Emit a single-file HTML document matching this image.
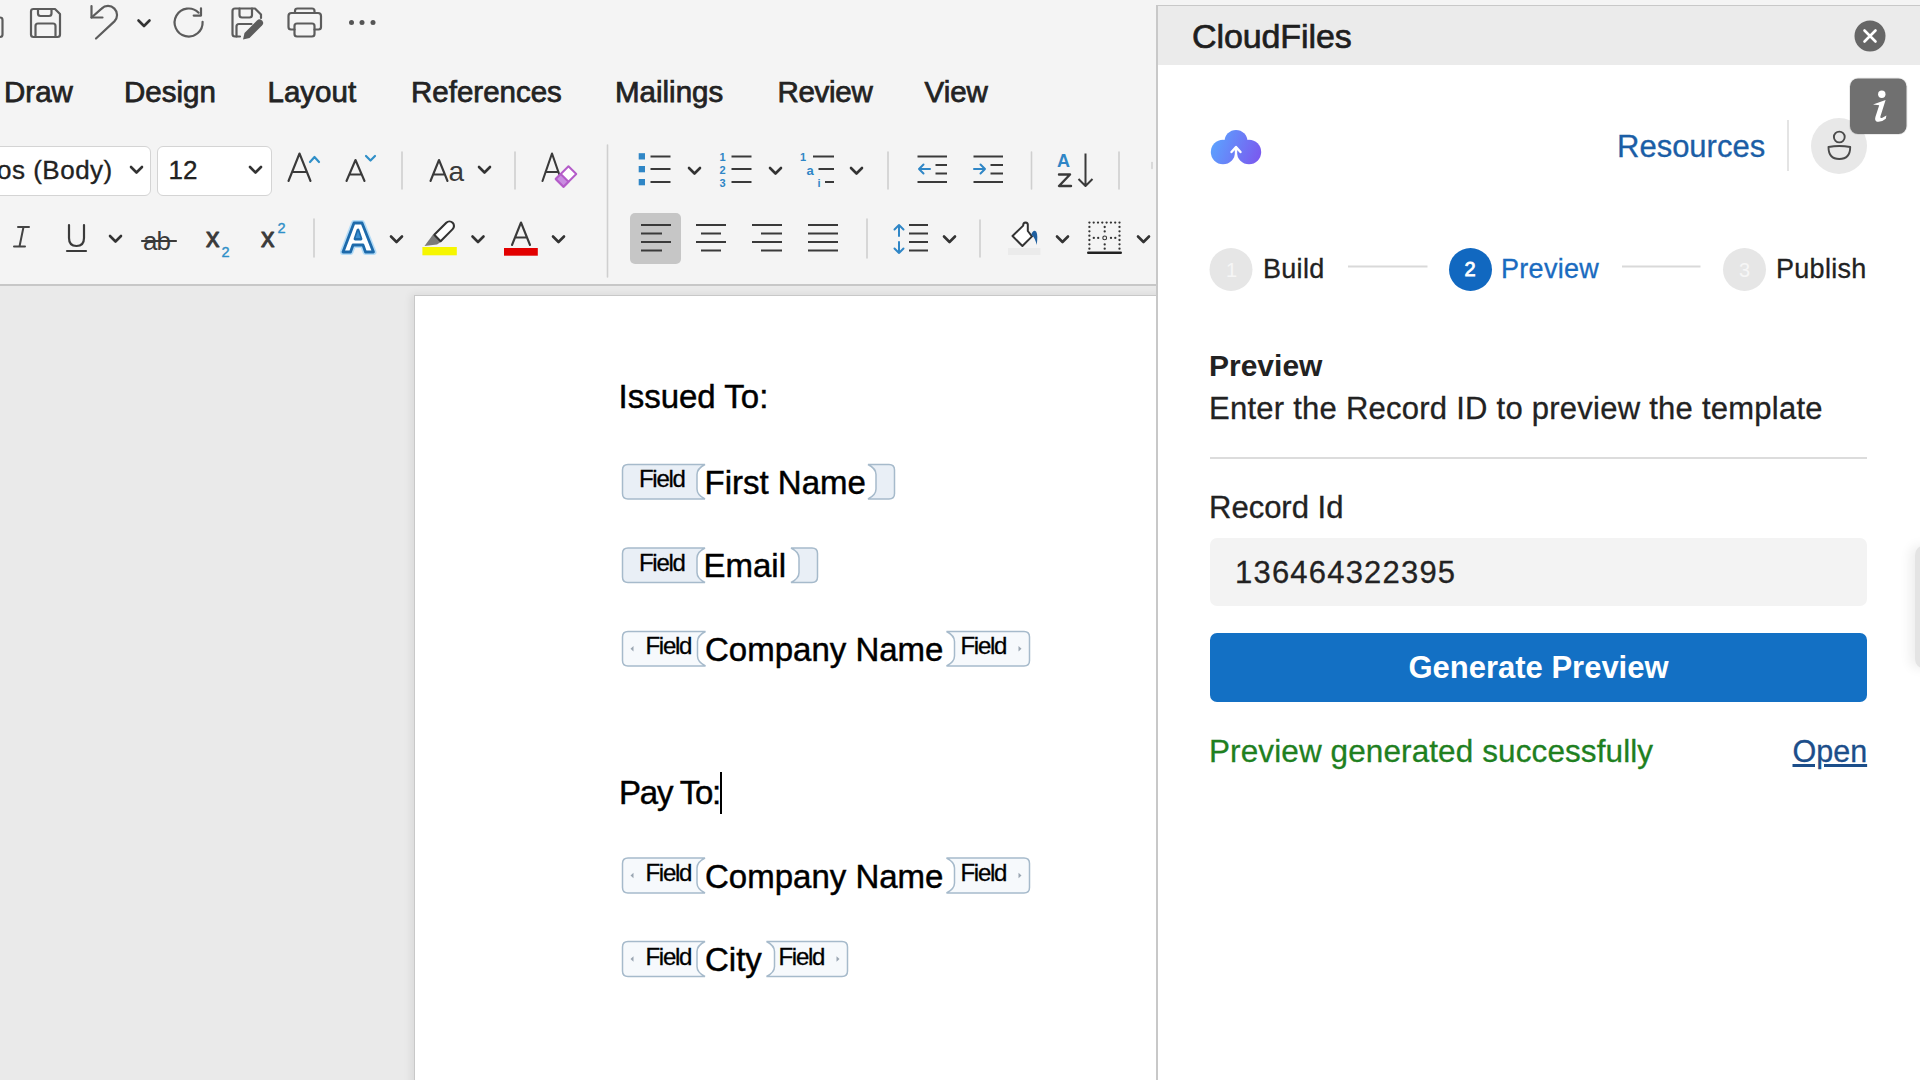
<!DOCTYPE html>
<html><head><meta charset="utf-8">
<style>
*{margin:0;padding:0;box-sizing:border-box}
html,body{width:1920px;height:1080px;overflow:hidden;background:#f4f4f4;font-family:"Liberation Sans",sans-serif;color:#222}
.a{position:absolute;white-space:nowrap}
#ribbon{position:absolute;left:0;top:0;width:1156px;height:285px;background:#f4f4f4}
#ribline{position:absolute;left:0;top:284px;width:1156px;height:2px;background:#c7c7c7}
#docbg{position:absolute;left:0;top:286px;width:1156px;height:794px;background:#eaeaea}
#page{position:absolute;left:414px;top:295px;width:760px;height:800px;background:#fff;border-left:1px solid #c8c8c8;border-top:1px solid #c8c8c8;box-shadow:-3px -1px 8px rgba(0,0,0,0.07)}
.tab{font-size:29.5px;color:#232323;top:75.3px;-webkit-text-stroke:0.75px #232323}
.doc{font-size:33px;color:#000;-webkit-text-stroke:0.45px #000}
.stp{font-size:27px;letter-spacing:0.3px;-webkit-text-stroke:0.45px currentColor}
.fld{font-size:24px;color:#000;letter-spacing:-1.3px;-webkit-text-stroke:0.3px #000}
#pane{position:absolute;left:1156px;top:5px;width:764px;height:1075px;background:#fff;border-left:2px solid #c8c8c8;border-top:1px solid #c8c8c8}
.sw{-webkit-text-stroke:0.3px currentColor}
#phead{position:absolute;left:1158px;top:6px;width:762px;height:59px;background:#ebebeb}
</style></head><body>
<div id="ribbon"></div>
<div id="ribline"></div>
<div id="docbg"></div>
<div id="page"></div>

<!-- tabs -->
<div class="a tab" style="left:4px">Draw</div>
<div class="a tab" style="left:124px">Design</div>
<div class="a tab" style="left:267.5px">Layout</div>
<div class="a tab" style="left:411px">References</div>
<div class="a tab" style="left:615px">Mailings</div>
<div class="a tab" style="left:777.5px;letter-spacing:-0.3px">Review</div>
<div class="a tab" style="left:924.5px">View</div>

<!-- font boxes -->
<div class="a" style="left:-10px;top:145.5px;width:161px;height:50px;background:#fff;border:1px solid #d4d4d4;border-radius:6px"></div>
<div class="a" style="left:157px;top:145.5px;width:115px;height:50px;background:#fff;border:1px solid #d4d4d4;border-radius:6px"></div>
<div class="a" style="left:-3px;top:154.5px;font-size:26px;color:#222;letter-spacing:0.5px;-webkit-text-stroke:0.35px #222">os (Body)</div>
<div class="a" style="left:168.5px;top:154.5px;font-size:26px;color:#222;-webkit-text-stroke:0.35px #222">12</div>

<!-- align-left selected bg -->
<div class="a" style="left:630px;top:213px;width:51px;height:51px;background:#c6c6c6;border-radius:5px"></div>

<svg class="a" style="left:0;top:0" width="1156" height="285" viewBox="0 0 1156 285" fill="none" stroke-linecap="round" stroke-linejoin="round">
<g stroke="#5c5c5c" stroke-width="2.2">
<path d="M-6 17.5 H0 Q2.5 17.5 2.5 20 V34.5 Q2.5 37 0 37 H-6"/>
<path d="M33.5 9 H55 L60 14 V34.5 Q60 37 57.5 37 H33.5 Q31 37 31 34.5 V11.5 Q31 9 33.5 9 Z"/>
<path d="M38 9 V13.5 Q38 16 40.5 16 H49 Q51.5 16 51.5 13.5 V9"/>
<path d="M35.5 37 V26 Q35.5 23.5 38 23.5 H53 Q55.5 23.5 55.5 26 V37"/>
<path d="M91.5 6 V17.5 H102.5"/>
<path d="M91.5 17.5 L101.6 8.6 A9 9 0 0 1 114.4 21.4 L96 38.5"/>
<path d="M202.6 21.8 A14 14 0 1 1 198.6 12.7"/>
<path d="M201 8.3 V15.6 H193.7"/>
<path d="M261 18 V14.5 L255 8.5 H235 Q232.5 8.5 232.5 11 V34 Q232.5 36.5 235 36.5 H240"/>
<path d="M239.5 8.5 V15 Q239.5 17.5 242 17.5 H249.5 Q252 17.5 252 15 V8.5"/>
<path d="M236.5 36.5 V26.5 Q236.5 24 239 24 H251.5"/>
<path d="M295 13 V11 Q295 8.5 297.5 8.5 H312 Q314.5 8.5 314.5 11 V13"/>
<path d="M294.5 29.5 H291 Q288.5 29.5 288.5 27 V16 Q288.5 13 291.5 13 H318 Q321 13 321 16 V27 Q321 29.5 318.5 29.5 H314.5"/>
<rect x="294.5" y="23.5" width="20" height="13" rx="2.5"/>
</g>
<path d="M243 39.5 L244.5 33 L257 20.5 Q259.5 18 262 20.5 Q264.5 23 262 25.5 L249.5 38 Z" fill="#5c5c5c"/>
<g fill="#555"><circle cx="351.5" cy="22.5" r="2.5"/><circle cx="362" cy="22.5" r="2.5"/><circle cx="373" cy="22.5" r="2.5"/></g>

<!-- chevrons -->
<g stroke="#333" stroke-width="2.6">
<path d="M138.5 20.5 L144 26 L149.5 20.5"/>
<path d="M131 167 L136.5 172.5 L142 167"/>
<path d="M250 167 L255.5 172.5 L261 167"/>
<path d="M479 167 L484.5 172.5 L490 167"/>
<path d="M110 236 L115.5 241.5 L121 236"/>
<path d="M391 236.5 L396.5 242 L402 236.5"/>
<path d="M472.5 236.5 L478 242 L483.5 236.5"/>
<path d="M553 236.5 L558.5 242 L564 236.5"/>
<path d="M689 168 L694.5 173.5 L700 168"/>
<path d="M770 168 L775.5 173.5 L781 168"/>
<path d="M851 168 L856.5 173.5 L862 168"/>
<path d="M944 236.5 L949.5 242 L955 236.5"/>
<path d="M1057 236.5 L1062.5 242 L1068 236.5"/>
<path d="M1138 236.5 L1143.5 242 L1149 236.5"/>
</g>

<!-- separators -->
<g stroke="#cfcfcf" stroke-width="1.6">
<path d="M402 152 V189"/><path d="M515 152 V189"/><path d="M314 219 V257"/>
<path d="M607.5 145 V277"/><path d="M888 152 V189"/><path d="M1031.5 152 V189"/><path d="M1119 152 V189"/>
<path d="M867 219 V258"/><path d="M980 220 V257"/>
</g>

<!-- font row 1 glyphs -->
<g stroke="#3a3a3a" stroke-width="2.1">
<path d="M288.5 181 L299.5 153.5 L310.5 181 M292 172 H307"/>
<path d="M346.5 181 L355.5 160 L364.5 181 M349.3 174.5 H361.7"/>
<path d="M430.5 181 L439 160 L447.5 181 M433.2 174.5 H444.8"/>
<path d="M542.5 181 L552 153.5 L561.5 181 M545.5 172 H558.5"/>
</g>
<text x="448.5" y="181" font-family="Liberation Sans" font-size="28" fill="#3a3a3a">a</text>
<g stroke="#2f8fc8" stroke-width="2.2">
<path d="M310 162 L314.5 157 L319 162"/>
<path d="M366 156 L370.5 160.5 L375 156"/>
</g>
<g transform="translate(566 176.5) rotate(-45)">
<rect x="-9" y="-5.5" width="18" height="11" fill="#fff" stroke="#b45cc9" stroke-width="2"/>
<rect x="-9" y="-5.5" width="7" height="11" fill="#c98de0" stroke="#b45cc9" stroke-width="2"/>
</g>

<!-- font row 2 -->
<g stroke="#444" stroke-width="2">
<path d="M18 227 H29 M14 246.5 H25 M23.5 227 L19.5 246.5"/>
</g>
<g stroke="#3a3a3a" stroke-width="2.2">
<path d="M69 225 V238 Q69 246 76.5 246 Q84 246 84 238 V225"/>
<path d="M67 251 H86"/>
<path d="M142 241 H176"/>
</g>
<text x="143" y="250" font-family="Liberation Sans" font-size="26" fill="#3a3a3a" letter-spacing="-1">ab</text>
<text x="206" y="247" font-family="Liberation Sans" font-size="27" fill="#3a3a3a" stroke="#3a3a3a" stroke-width="0.9">x</text>
<text x="221.5" y="256.5" font-family="Liberation Sans" font-size="14.5" fill="#2f8fc8" stroke="#2f8fc8" stroke-width="0.4">2</text>
<text x="261" y="247" font-family="Liberation Sans" font-size="27" fill="#3a3a3a" stroke="#3a3a3a" stroke-width="0.9">x</text>
<text x="277.5" y="232.5" font-family="Liberation Sans" font-size="14.5" fill="#2f8fc8" stroke="#2f8fc8" stroke-width="0.4">2</text>

<!-- text effects A -->
<path d="M343 252 L354 223 H362 L373.5 252 H365.5 L363 245 H353 L350.5 252 Z M355 239 H361 L358 230 Z" fill="#fff" stroke="#b3dbf6" stroke-width="6" stroke-linejoin="round"/>
<path d="M343 252 L354 223 H362 L373.5 252 H365.5 L363 245 H353 L350.5 252 Z M355 239 H361 L358 230 Z" fill="#fff" stroke="#1d6aab" stroke-width="2.8" stroke-linejoin="round"/>
<path d="M355.5 238 H360.5 L358 231 Z" fill="#3d8fd0"/>
<!-- highlighter -->
<path d="M433 234.5 L441.5 241.5 L437 244.5 L424.5 246 Z" fill="#7a7a7a"/>
<g transform="translate(443.8 231.6) rotate(-45)">
<path d="M-9 -4.5 H8 A4.5 4.5 0 0 1 8 4.5 H-9 Z" fill="#fff" stroke="#333" stroke-width="2.1" stroke-linejoin="round"/>
</g>
<rect x="422.4" y="247" width="34.4" height="8.3" fill="#f6f600"/>
<!-- font color -->
<path d="M512 245 L521 222.5 L530 245 M515 237.5 H527" stroke="#3a3a3a" stroke-width="2.1"/>
<rect x="504" y="248" width="33.8" height="7.7" fill="#e20000"/>

<!-- bullets -->
<g fill="#2f86c6">
<rect x="638.7" y="153.2" width="6.3" height="6.3"/><rect x="638.7" y="166" width="6.3" height="6.3"/><rect x="638.7" y="179" width="6.3" height="6.3"/>
</g>
<g stroke="#3a3a3a" stroke-width="2" stroke-linecap="butt">
<path d="M650.5 156.5 H670.5 M650.5 169 H670.5 M650.5 182 H670.5"/>
<path d="M731.5 156.5 H751.5 M731.5 169 H751.5 M731.5 182 H751.5"/>
<path d="M813 156.5 H834 M818.5 169 H834 M825 182 H834"/>
<path d="M917.5 156.5 H947 M935.5 165 H947 M935.5 173.5 H947 M917.5 182 H947"/>
<path d="M973.5 156.5 H1003 M990.5 165 H1003 M990.5 173.5 H1003 M973.5 182 H1003"/>
<path d="M1085.5 153.5 V186 M1078.5 179 L1085.5 186 L1092.5 179"/>
</g>
<g font-family="Liberation Sans" font-weight="bold" fill="#2f86c6" font-size="11">
<text x="719.5" y="161">1</text><text x="719.5" y="173.5">2</text><text x="719.5" y="186.5">3</text>
<text x="800" y="161">1</text><text x="806.5" y="174.5" font-size="13">a</text><text x="817.5" y="187">i</text>
</g>
<g stroke="#2f86c6" stroke-width="2">
<path d="M930 169 H919 M923.5 164.5 L919 169 L923.5 173.5"/>
<path d="M974 169 H985 M980.5 164.5 L985 169 L980.5 173.5"/>
<path d="M899 225 V236 M894.5 229.5 L899 225 L903.5 229.5 M899 242 V253 M894.5 248.5 L899 253 L903.5 248.5"/>
</g>
<text x="1057" y="167" font-family="Liberation Sans" font-weight="bold" font-size="18" fill="#2f86c6">A</text>
<path d="M1059 174.5 H1070 L1059 186 H1071" stroke="#3a3a3a" stroke-width="2.4"/>

<!-- alignment -->
<g stroke="#3a3a3a" stroke-width="2.2" stroke-linecap="butt">
<path d="M641 225 H671 M641 233.5 H662 M641 242 H671 M641 250.5 H662"/>
<path d="M696 225 H726 M701 233.5 H721 M696 242 H726 M701 250.5 H721"/>
<path d="M752 225 H782 M761 233.5 H782 M752 242 H782 M761 250.5 H782"/>
<path d="M808 225 H838 M808 233.5 H838 M808 242 H838 M808 250.5 H838"/>
<path d="M909 225 H928 M909 233.5 H928 M909 242 H928 M909 250.5 H928"/>
</g>
<!-- shading -->
<rect x="1008" y="248" width="32.5" height="7" fill="#ebebeb"/>
<path d="M1012.5 236 L1023.2 225.6 Q1023 222.6 1025.6 222.4 Q1028 222.6 1027.8 225 V231 L1032 236.4 L1022.4 246 Z" fill="#fff" stroke="#333" stroke-width="2" stroke-linejoin="round"/>
<path d="M1031.3 234.5 Q1033.5 228.8 1036.3 231.8 Q1038.2 235.5 1036.6 245 Q1035.6 238.5 1031.3 234.5 Z" fill="#1f5f9f"/>
<!-- borders -->
<g fill="#333"><circle cx="1089.4" cy="222.6" r="1.15"/><circle cx="1093.7" cy="222.6" r="1.15"/><circle cx="1098.0" cy="222.6" r="1.15"/><circle cx="1102.3" cy="222.6" r="1.15"/><circle cx="1106.6" cy="222.6" r="1.15"/><circle cx="1110.9" cy="222.6" r="1.15"/><circle cx="1115.2" cy="222.6" r="1.15"/><circle cx="1119.5" cy="222.6" r="1.15"/><circle cx="1089.4" cy="226.9" r="1.15"/><circle cx="1119.5" cy="226.9" r="1.15"/><circle cx="1089.4" cy="231.3" r="1.15"/><circle cx="1119.5" cy="231.3" r="1.15"/><circle cx="1089.4" cy="235.7" r="1.15"/><circle cx="1119.5" cy="235.7" r="1.15"/><circle cx="1089.4" cy="240.0" r="1.15"/><circle cx="1119.5" cy="240.0" r="1.15"/><circle cx="1089.4" cy="244.3" r="1.15"/><circle cx="1119.5" cy="244.3" r="1.15"/><circle cx="1089.4" cy="248.7" r="1.15"/><circle cx="1119.5" cy="248.7" r="1.15"/><circle cx="1104.7" cy="227.0" r="1.15"/><circle cx="1104.7" cy="231.4" r="1.15"/><circle cx="1104.7" cy="244.4" r="1.15"/><circle cx="1104.7" cy="248.7" r="1.15"/><circle cx="1093.8" cy="237.9" r="1.15"/><circle cx="1098.2" cy="237.9" r="1.15"/><circle cx="1111.0" cy="237.9" r="1.15"/><circle cx="1115.3" cy="237.9" r="1.15"/></g>
<circle cx="1104.7" cy="237.9" r="1.9" fill="none" stroke="#333" stroke-width="1.1"/>
<path d="M1088.2 252.7 H1120.8" stroke="#222" stroke-width="2.4" stroke-linecap="round"/>
<path d="M1152 162.5 V168.5" stroke="#d0d0d0" stroke-width="1.5"/>
</svg>

<!-- document -->
<svg class="a" style="left:0;top:0" width="1156" height="1080" viewBox="0 0 1156 1080" fill="none">
<path d="M628.0 464.5 H705 C701 466.5 697 469.5 697 474.5 V489 C697 494 701 497 705 499 H628.0 Q622.5 499 622.5 493.5 V470.0 Q622.5 464.5 628.0 464.5 Z" fill="#e9eff6" stroke="#a6bacb" stroke-width="1.5"/>
<path d="M868 464.5 H889.0 Q894.5 464.5 894.5 470.0 V493.5 Q894.5 499 889.0 499 H868 C872 497 876 494 876 489 V474.5 C876 469.5 872 466.5 868 464.5 Z" fill="#e9eff6" stroke="#a6bacb" stroke-width="1.5"/>
<path d="M628.0 548 H705 C701 550 697 553 697 558 V572.5 C697 577.5 701 580.5 705 582.5 H628.0 Q622.5 582.5 622.5 577.0 V553.5 Q622.5 548 628.0 548 Z" fill="#e9eff6" stroke="#a6bacb" stroke-width="1.5"/>
<path d="M791 548 H812.0 Q817.5 548 817.5 553.5 V577.0 Q817.5 582.5 812.0 582.5 H791 C795 580.5 799 577.5 799 572.5 V558 C799 553 795 550 791 548 Z" fill="#e9eff6" stroke="#a6bacb" stroke-width="1.5"/>
<path d="M628.0 631.5 H705.5 C701.5 633.5 697.5 636.5 697.5 641.5 V656 C697.5 661 701.5 664 705.5 666 H628.0 Q622.5 666 622.5 660.5 V637.0 Q622.5 631.5 628.0 631.5 Z" fill="#f6f9fc" stroke="#a6bacb" stroke-width="1.5"/><path d="M633.5 645.95 L630.5 648.75 L633.5 651.55 Z" fill="#9aa6b2"/>
<path d="M946.5 631.5 H1024.0 Q1029.5 631.5 1029.5 637.0 V660.5 Q1029.5 666 1024.0 666 H946.5 C950.5 664 954.5 661 954.5 656 V641.5 C954.5 636.5 950.5 633.5 946.5 631.5 Z" fill="#f6f9fc" stroke="#a6bacb" stroke-width="1.5"/><path d="M1018.5 645.95 L1021.5 648.75 L1018.5 651.55 Z" fill="#9aa6b2"/>
<path d="M628.0 858 H705 C701 860 697 863 697 868 V883 C697 888 701 891 705 893 H628.0 Q622.5 893 622.5 887.5 V863.5 Q622.5 858 628.0 858 Z" fill="#f6f9fc" stroke="#a6bacb" stroke-width="1.5"/><path d="M633.5 872.7 L630.5 875.5 L633.5 878.3 Z" fill="#9aa6b2"/>
<path d="M946.5 858 H1024.0 Q1029.5 858 1029.5 863.5 V887.5 Q1029.5 893 1024.0 893 H946.5 C950.5 891 954.5 888 954.5 883 V868 C954.5 863 950.5 860 946.5 858 Z" fill="#f6f9fc" stroke="#a6bacb" stroke-width="1.5"/><path d="M1018.5 872.7 L1021.5 875.5 L1018.5 878.3 Z" fill="#9aa6b2"/>
<path d="M628.0 941.5 H705 C701 943.5 697 946.5 697 951.5 V966.5 C697 971.5 701 974.5 705 976.5 H628.0 Q622.5 976.5 622.5 971.0 V947.0 Q622.5 941.5 628.0 941.5 Z" fill="#f6f9fc" stroke="#a6bacb" stroke-width="1.5"/><path d="M633.5 956.2 L630.5 959.0 L633.5 961.8 Z" fill="#9aa6b2"/>
<path d="M766.5 941.5 H842.0 Q847.5 941.5 847.5 947.0 V971.0 Q847.5 976.5 842.0 976.5 H766.5 C770.5 974.5 774.5 971.5 774.5 966.5 V951.5 C774.5 946.5 770.5 943.5 766.5 941.5 Z" fill="#f6f9fc" stroke="#a6bacb" stroke-width="1.5"/><path d="M836.5 956.2 L839.5 959.0 L836.5 961.8 Z" fill="#9aa6b2"/>
</svg>
<div class="a doc" style="left:618.5px;top:377.8px">Issued To:</div>
<div class="a doc" style="left:704.5px;top:463.8px">First Name</div>
<div class="a doc" style="left:703.5px;top:547.3px">Email</div>
<div class="a doc" style="left:705px;top:630.8px">Company Name</div>
<div class="a doc" style="left:619px;top:773.8px;letter-spacing:-1.2px">Pay To:</div>
<div class="a" style="left:720px;top:772px;width:2px;height:42px;background:#000"></div>
<div class="a doc" style="left:705px;top:857.6px">Company Name</div>
<div class="a doc" style="left:705px;top:941.1px">City</div>
<div class="a fld" style="left:639px;top:465.3px">Field</div>
<div class="a fld" style="left:639px;top:548.8px">Field</div>
<div class="a fld" style="left:645.5px;top:632.4px">Field</div>
<div class="a fld" style="left:960.5px;top:632.4px">Field</div>
<div class="a fld" style="left:645.5px;top:859.1px">Field</div>
<div class="a fld" style="left:960.5px;top:859.1px">Field</div>
<div class="a fld" style="left:645.5px;top:942.6px">Field</div>
<div class="a fld" style="left:778.5px;top:942.6px">Field</div>

<!-- pane -->
<div id="pane"></div>
<div id="phead"></div>
<div class="a" style="left:1192px;top:17px;font-size:34px;color:#1e1e1e;-webkit-text-stroke:0.7px #1e1e1e;letter-spacing:-0.1px">CloudFiles</div>
<svg class="a" style="left:1156px;top:0" width="764" height="320" viewBox="1156 0 764 320">
<circle cx="1870" cy="36" r="15.5" fill="#666"/>
<path d="M1864.5 30.5 L1875.5 41.5 M1875.5 30.5 L1864.5 41.5" stroke="#fff" stroke-width="2.6" stroke-linecap="round"/>
<defs><linearGradient id="cg" gradientUnits="userSpaceOnUse" x1="1211" y1="140" x2="1261" y2="160"><stop offset="0" stop-color="#5ba4ff"/><stop offset="1" stop-color="#7b57ee"/></linearGradient></defs>
<g fill="url(#cg)">
<circle cx="1223" cy="152" r="12.2"/><circle cx="1236" cy="141.5" r="11.5"/><circle cx="1249" cy="152" r="12.2"/>
<rect x="1226" y="141" width="20" height="13"/>
</g>
<path d="M1236 161 V147.5 M1231.5 152 L1236 147 L1240.5 152" stroke="#fff" stroke-width="2.4" fill="none" stroke-linecap="round" stroke-linejoin="round"/>
<path d="M1788 120 V171" stroke="#dedede" stroke-width="1.6"/>
<circle cx="1839" cy="146" r="28" fill="#e8e8e8"/>
<circle cx="1839.3" cy="137" r="5.4" fill="none" stroke="#4a4a4a" stroke-width="1.9"/>
<path d="M1828.5 147 Q1839.3 145 1850.2 147 Q1850.2 159 1839.3 159 Q1828.5 159 1828.5 147 Z" fill="none" stroke="#4a4a4a" stroke-width="1.9" stroke-linejoin="round"/>
<rect x="1849" y="77.5" width="58.5" height="57.5" rx="9" fill="#000" opacity="0.08"/><rect x="1850" y="78.5" width="56.5" height="55.5" rx="8" fill="#707070"/>
<circle cx="1881.8" cy="94.2" r="3.7" fill="#fff"/>
<path d="M1873 104.5 L1885.6 100 L1880.4 116.5 Q1879.9 118.8 1882.4 117.8 L1886.4 115.5 L1885.8 118.7 Q1881.4 122.5 1876.9 121.7 Q1874.4 120.8 1875.4 117.1 L1879.2 105.3 Z" fill="#fff"/>
<circle cx="1231" cy="269.5" r="21.5" fill="#e6e6e6"/>
<text x="1231.5" y="276.5" text-anchor="middle" font-family="Liberation Sans" font-size="20" fill="#f6f6f6">1</text>
<circle cx="1470.5" cy="269.5" r="21.5" fill="#1168c0"/>
<text x="1470" y="276.3" text-anchor="middle" font-family="Liberation Sans" font-size="20" fill="#fff" stroke="#fff" stroke-width="0.8">2</text>
<circle cx="1744.5" cy="269.5" r="21.5" fill="#e6e6e6"/>
<text x="1744.5" y="276.5" text-anchor="middle" font-family="Liberation Sans" font-size="20" fill="#f6f6f6">3</text>
<path d="M1348 266.5 H1427.5 M1622 266.5 H1700.5" stroke="#d9d9d9" stroke-width="2.2"/>
</svg>
<div class="a sw" style="left:1617px;top:129px;font-size:31px;color:#1b5ea6">Resources</div>
<div class="a sw stp" style="left:1263px;top:254px;color:#222">Build</div>
<div class="a sw stp" style="left:1501px;top:254px;color:#1a6bc0">Preview</div>
<div class="a sw stp" style="left:1776px;top:254px;color:#222">Publish</div>
<div class="a" style="left:1209px;top:349px;font-size:30px;font-weight:bold;color:#222">Preview</div>
<div class="a sw" style="left:1209px;top:391px;font-size:31px;color:#222;letter-spacing:0.25px">Enter the Record ID to preview the template</div>
<div class="a" style="left:1210px;top:457px;width:657px;height:2px;background:#dcdcdc"></div>
<div class="a sw" style="left:1209px;top:490px;font-size:31px;color:#222">Record Id</div>
<div class="a" style="left:1210px;top:538px;width:657px;height:68px;background:#f3f3f3;border-radius:7px"></div>
<div class="a sw" style="left:1235px;top:555px;font-size:31px;color:#222;letter-spacing:1.2px">136464322395</div>
<div class="a" style="left:1210px;top:633px;width:657px;height:69px;background:#1370c4;border-radius:7px"></div>
<div class="a" style="left:1210px;top:650px;width:657px;text-align:center;font-size:31px;font-weight:bold;color:#fff">Generate Preview</div>
<div class="a sw" style="left:1209px;top:733px;font-size:31.5px;color:#1f801f;letter-spacing:0.1px">Preview generated successfully</div>
<div class="a sw" style="left:1792.5px;top:734px;font-size:30.5px;color:#1c4e8a;text-decoration:underline">Open</div>
<div class="a" style="left:1915px;top:545px;width:20px;height:124px;border-radius:10px;background:#e4e4e4;box-shadow:-5px 0 12px rgba(0,0,0,0.07)"></div>
</body></html>
